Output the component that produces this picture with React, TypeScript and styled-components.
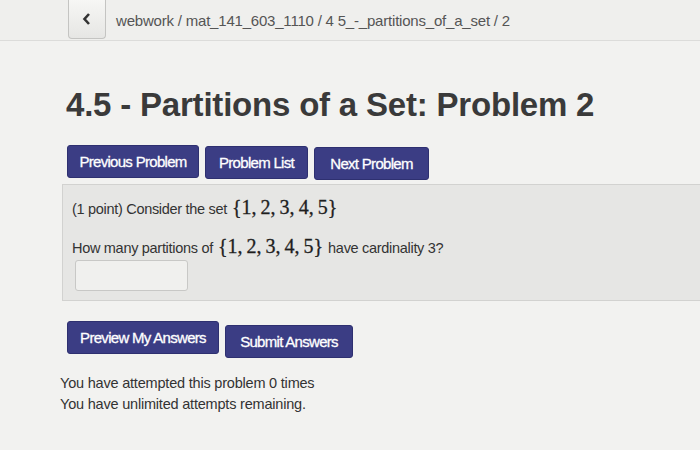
import React from "react";
import styled, { createGlobalStyle } from "styled-components";

const Global = createGlobalStyle`
  html, body { margin: 0; padding: 0; background: #f1f1ef; }
  body { font-family: "Liberation Sans", Arial, sans-serif; color: #333; }
`;

const Page = styled.div`
  width: 700px;
  height: 450px;
  overflow: hidden;
  background: #f2f2f0;
`;

const TopBar = styled.div`
  height: 40px;
  display: flex;
  align-items: center;
  gap: 10px;
  padding-left: 68px;
  background: #efefed;
  border-bottom: 1px solid #dcdcda;
`;

const BackButton = styled.div`
  width: 38px;
  height: 40px;
  margin-top: -2px;
  box-sizing: border-box;
  border: 1px solid #c4c4c2;
  border-top: none;
  border-radius: 0 0 4px 4px;
  background: linear-gradient(#f7f7f5, #e6e6e4);
  display: flex;
  align-items: center;
  justify-content: center;
  color: #333;
`;

const Crumbs = styled.div`
  font-size: 15px;
  color: #555;
  letter-spacing: -0.2px;
`;

const Content = styled.div`
  padding: 0 0 0 62px;
`;

const Title = styled.h1`
  margin: 46px 0 0 4px;
  font-size: 33px;
  font-weight: bold;
  color: #3a3a3a;
  letter-spacing: -0.2px;
  line-height: 36px;
`;

const ButtonRow = styled.div<{ $top: number }>`
  display: flex;
  gap: 6px;
  margin: ${(p) => p.$top}px 0 0 5px;
  align-items: flex-start;
`;

const NavButton = styled.div<{ $w: number; $dy?: number }>`
  width: ${(p) => p.$w}px;
  height: 33px;
  margin-top: ${(p) => p.$dy ?? 0}px;
  box-sizing: border-box;
  background: #3b3d84;
  border: 1px solid #2e3070;
  border-radius: 3px;
  color: #fff;
  font-size: 15px;
  letter-spacing: -0.7px;
  -webkit-text-stroke: 0.3px #fff;
  display: flex;
  align-items: center;
  justify-content: center;
`;

const ProblemBox = styled.div`
  margin-top: 4px;
  height: 117px;
  box-sizing: border-box;
  background: #e6e6e4;
  border: 1px solid #d2d2d0;
  border-right: none;
  padding: 11px 0 0 9px;
  font-size: 14.5px;
  letter-spacing: -0.3px;
  color: #333;
`;

const Line = styled.div<{ $top?: number }>`
  margin-top: ${(p) => p.$top ?? 0}px;
  display: flex;
  align-items: baseline;
  gap: 5px;
`;

const MathSet = styled.span`
  font-family: "Liberation Serif", "Times New Roman", serif;
  font-size: 20px;
  letter-spacing: 0;
  color: #1e1e1e;
  -webkit-text-stroke: 0.3px #1e1e1e;
`;

const AnswerInput = styled.div`
  margin: 2px 0 0 3px;
  width: 113px;
  height: 31px;
  box-sizing: border-box;
  background: #f0f0ee;
  border: 1px solid #c8c8c6;
  border-radius: 3px;
`;

const Status = styled.div`
  margin: 15px 0 0 -2px;
  font-size: 14.5px;
  line-height: 21px;
  color: #333;
  letter-spacing: -0.2px;
`;

const SET = "{1,\u20092,\u20093,\u20094,\u20095}";

export default function App() {
  return (
    <Page>
      <Global />
      <TopBar>
        <BackButton>
          <svg width="12" height="14" viewBox="0 0 12 14">
            <path d="M8 2 L3.5 7 L8 12" fill="none" stroke="#333" strokeWidth="2.6" />
          </svg>
        </BackButton>
        <Crumbs>webwork / mat_141_603_1110 / 4 5_-_partitions_of_a_set / 2</Crumbs>
      </TopBar>
      <Content>
        <Title>4.5 - Partitions of a Set: Problem 2</Title>
        <ButtonRow $top={22}>
          <NavButton $w={132}>Previous Problem</NavButton>
          <NavButton $w={103} $dy={1}>Problem List</NavButton>
          <NavButton $w={115} $dy={2}>Next Problem</NavButton>
        </ButtonRow>
        <ProblemBox>
          <Line>
            (1 point) Consider the set <MathSet>{SET}</MathSet>
          </Line>
          <Line $top={16}>
            How many partitions of <MathSet>{SET}</MathSet> have cardinality 3?
          </Line>
          <AnswerInput />
        </ProblemBox>
        <ButtonRow $top={20}>
          <NavButton $w={152}>Preview My Answers</NavButton>
          <NavButton $w={128} $dy={4}>Submit Answers</NavButton>
        </ButtonRow>
        <Status>
          You have attempted this problem 0 times
          <br />
          You have unlimited attempts remaining.
        </Status>
      </Content>
    </Page>
  );
}
